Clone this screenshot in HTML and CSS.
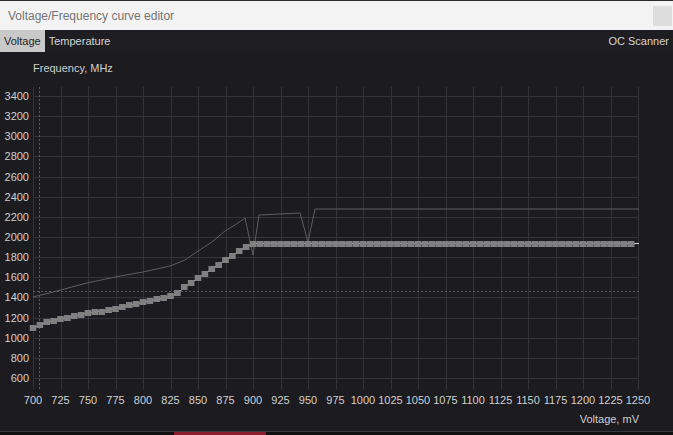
FILE: index.html
```html
<!doctype html>
<html lang="en">
    <head>
        <meta charset="UTF-8" />
        <title>Voltage/Frequency curve editor</title>
        <link rel="stylesheet" href="styles.css">
    </head>
    <body>
        <div class="window">
            <div class="titlebar">
                <span class="title">Voltage/Frequency curve editor</span>
                <span class="close"></span>
            </div>
            <div class="tabs">
                <span class="tab active">Voltage</span>
                <span class="tab">Temperature</span>
                <span class="tab scanner">OC Scanner</span>
            </div>
            <div class="editor">
                <div class="axis-title">Frequency, MHz</div>
                <svg id="chart" class="chart" width="673" height="332" viewBox="0 78 673 332"></svg>
                <div class="axis-title voltage">Voltage, mV</div>
            </div>
            <div class="below">
                <span class="red"></span>
            </div>
        </div>

        <script>
            const svg = document.getElementById("chart");
            const NS = "http://www.w3.org/2000/svg";
            const X = (v) => 33 + (v - 700) * 1.1;
            const Y = (f) => 97 + ((3400 - f) * 282) / 2800;

            function add(tag, attrs, text) {
                const el = document.createElementNS(NS, tag);
                for (const k in attrs) el.setAttribute(k, attrs[k]);
                if (text) el.textContent = text;
                svg.appendChild(el);
                return el;
            }

            // grid + labels
            for (let v = 700; v <= 1250; v += 25) {
                const x = Math.round(X(v)) + 0.5;
                add("line", { x1: x, y1: 88, x2: x, y2: 390, class: "grid" });
                add("text", { x: X(v), y: 405, class: "label mid" }, String(v));
            }
            for (let f = 600; f <= 3400; f += 200) {
                const y = Math.round(Y(f)) + 0.5;
                add("line", { x1: 33, y1: y, x2: 639, y2: y, class: "grid" });
                add("text", { x: 29, y: Y(f) + 4, class: "label end" }, String(f));
            }

            // current point markers
            add("line", { x1: 39.5, y1: 88, x2: 39.5, y2: 390, class: "dash" });
            add("line", { x1: 33, y1: 292.5, x2: 639, y2: 292.5, class: "dash" });

            // default curve
            const base = [
                [33, 298], [53, 293], [87, 284], [120, 277], [143, 273],
                [170, 267], [185, 261], [198, 252], [212, 243], [225, 232],
                [235, 226], [245, 219], [253, 256], [259, 216], [300, 214],
                [308, 243], [315, 210], [639, 210],
            ];
            add("polyline", { points: base.map((p) => p.join(",")).join(" "), class: "base" });

            // edited curve
            const anchors = [
                [700, 1100], [706, 1130], [725, 1190], [750, 1240], [775, 1290],
                [800, 1350], [825, 1415], [831, 1445], [837, 1500], [850, 1590],
                [875, 1770], [893, 1905], [900, 1940], [1250, 1940],
            ];
            function freq(v) {
                for (let i = 1; i < anchors.length; i++) {
                    const [v0, f0] = anchors[i - 1];
                    const [v1, f1] = anchors[i];
                    if (v <= v1) return f0 + ((f1 - f0) * (v - v0)) / (v1 - v0);
                }
                return 1940;
            }
            const pts = [];
            for (let v = 700; v <= 1245; v += 6.25) {
                pts.push([X(v), Y(Math.round(freq(v) / 15) * 15)]);
            }
            pts.push([639, pts[pts.length - 1][1]]);
            add("polyline", { points: pts.map((p) => p.join(",")).join(" "), class: "curve" });
            pts.slice(0, -1).forEach(([x, y]) => {
                add("rect", { x: x - 3.3, y: Math.round(y - 3), width: 6.6, height: 6, class: "point" });
            });
        </script>
    </body>
</html>
```

FILE: styles.css
```css
body {
    margin: 0;
    background: #1c1b1f;
    font-family: "Liberation Sans", Arial, sans-serif;
    font-size: 11px;
}
.window {
    width: 673px;
    height: 435px;
    display: flex;
    flex-direction: column;
    overflow: hidden;
}
.titlebar {
    height: 30px;
    border-top: 1px solid #2b2a2e;
    background: #f3f3f3;
    display: flex;
    align-items: center;
    padding: 0 1px 0 8px;
}
.title {
    color: #747474;
    font-size: 12px;
}
.close {
    margin-left: auto;
    width: 19px;
    height: 20px;
    background: #dddddd;
}
.tabs {
    height: 22px;
    display: flex;
    align-items: stretch;
    background: #1e1d21;
}
.tab {
    display: flex;
    align-items: center;
    padding: 0 4px;
    color: #d6d6d6;
}
.tab.active {
    background: #c9c9c9;
    color: #1e1e1e;
}
.tab.scanner {
    margin-left: auto;
}
.editor {
    height: 379px;
    display: flex;
    flex-direction: column;
}
.axis-title {
    height: 18px;
    line-height: 18px;
    margin-top: 7px;
    padding-left: 33px;
    color: #d0d0d0;
}
.axis-title.voltage {
    height: 20px;
    line-height: 20px;
    margin-top: 0;
    padding-left: 0;
    padding-right: 34px;
    text-align: right;
}
.chart {
    display: block;
    height: 332px;
}
.grid {
    stroke: #343337;
    stroke-width: 1;
}
.dash {
    stroke: #5c5c5c;
    stroke-width: 1;
    stroke-dasharray: 2 2;
}
.base {
    fill: none;
    stroke: #5e5e5e;
    stroke-width: 1;
}
.curve {
    fill: none;
    stroke: #d8d8d8;
    stroke-width: 1;
}
.point {
    fill: #808080;
}
.label {
    fill: #d0d0d0;
    font-size: 11px;
}
.label.mid {
    text-anchor: middle;
}
.label.end {
    text-anchor: end;
}
.below {
    margin-top: 2px;
    height: 3px;
    border-top: 1px solid #3a393d;
    background: #101010;
    position: relative;
}
.red {
    position: absolute;
    left: 174px;
    width: 92px;
    top: 0;
    bottom: 0;
    background: #8a1c2c;
}
```
